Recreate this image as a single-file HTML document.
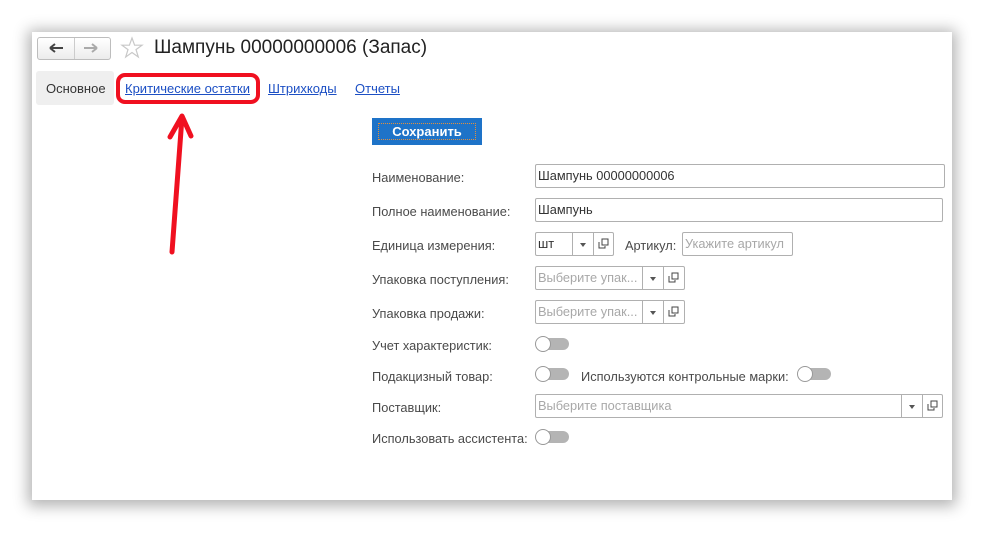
<!DOCTYPE html>
<html><head><meta charset="utf-8"><style>
*{box-sizing:border-box}
body{margin:0;width:984px;height:533px;background:#fff;font-family:"Liberation Sans",Arial,sans-serif;font-size:13px;color:#444;position:relative;overflow:hidden}
.panel{position:absolute;left:32px;top:32px;width:920px;height:468px;background:#fff;box-shadow:0 2px 14px 4px rgba(0,0,0,.3)}
.a{position:absolute}
.lbl{position:absolute;left:372px;color:#4a4a4a;font-size:12.8px}
.in{position:absolute;border:1px solid #b0b0b0;border-radius:2px;background:#fff;height:24px;line-height:22px;padding-left:2px;color:#333;font-size:12.8px;white-space:nowrap}
.ph{color:#a8a8a8}
.dd,.op{position:absolute;top:0;height:22px;border-left:1px solid #b0b0b0}
.dd:after{content:"";position:absolute;left:7px;top:10px;border:3px solid transparent;border-top:4px solid #555}
.tg{position:absolute;width:34px;height:16px}
.tg:before{content:"";position:absolute;left:8px;top:2px;width:26px;height:12px;border-radius:6px;background:#b4b4b4}
.tg:after{content:"";position:absolute;left:0;top:0;width:16px;height:16px;border-radius:50%;background:#fff;border:1px solid #999;box-sizing:border-box}
a{color:#1c4fc4;text-decoration:underline}
</style></head><body>
<div class="panel"></div>
<div class="a" style="left:37px;top:37px;width:74px;height:23px;border:1px solid #bdbdbd;border-radius:3px;background:linear-gradient(#fff,#ececec)"></div>
<div class="a" style="left:74px;top:38px;width:1px;height:21px;background:#ccc"></div>
<svg class="a" style="left:44px;top:41px" width="64" height="14"><path d="M6 7H19M6 7L11 3M6 7L11 11" stroke="#444" stroke-width="2" fill="none"/><path d="M53 7H40M53 7L48 3M53 7L48 11" stroke="#aaa" stroke-width="2" fill="none"/></svg>
<svg class="a" style="left:120px;top:36px" width="24" height="24"><path d="M12 2L14.6 9.2H22L16 13.6L18.3 21L12 16.5L5.7 21L8 13.6L2 9.2H9.4Z" fill="none" stroke="#c8c8c8" stroke-width="1.2"/></svg>
<div class="a" style="left:154px;top:37px;font-size:19px;color:#222">Шампунь 00000000006 (Запас)</div>
<div class="a" style="left:36px;top:71px;width:78px;height:34px;background:#efefef;border-radius:3px"></div>
<div class="a" style="left:46px;top:81px;color:#333">Основное</div>
<div class="a" style="left:125px;top:81px"><a>Критические остатки</a></div>
<div class="a" style="left:268px;top:81px"><a>Штрихкоды</a></div>
<div class="a" style="left:355px;top:81px"><a>Отчеты</a></div>
<div class="a" style="left:116px;top:73px;width:144px;height:31px;border:4px solid #f01020;border-radius:9px"></div>
<svg class="a" style="left:0;top:0" width="984" height="533"><path d="M172 252L182 117M170 137L182 116L191 136" stroke="#f01020" stroke-width="5" fill="none" stroke-linecap="round" stroke-linejoin="round"/></svg>
<div class="a" style="left:372px;top:118px;width:110px;height:27px;background:#1e73c8"></div>
<div class="a" style="left:378px;top:123px;width:98px;height:17px;border:1px dotted #e09040;color:#fff;font-weight:bold;font-size:13px;text-align:center;line-height:15px">Сохранить</div>
<div class="lbl" style="top:170px">Наименование:</div>
<div class="in" style="left:535px;top:164px;width:410px">Шампунь 00000000006</div>
<div class="lbl" style="top:204px">Полное наименование:</div>
<div class="in" style="left:535px;top:198px;width:408px">Шампунь</div>
<div class="lbl" style="top:238px">Единица измерения:</div>
<div class="in" style="left:535px;top:232px;width:79px">шт<div class="dd" style="left:36px;width:21px"></div><div class="op" style="left:57px;width:21px"></div></div>
<div class="a" style="left:625px;top:238px;color:#4a4a4a;font-size:12.8px">Артикул:</div>
<div class="in ph" style="left:682px;top:232px;width:111px;overflow:hidden">Укажите артикул</div>
<div class="lbl" style="top:272px">Упаковка поступления:</div>
<div class="in ph" style="left:535px;top:266px;width:150px">Выберите упак...<div class="dd" style="left:106px;width:21px;background:#fff"></div><div class="op" style="left:127px;width:21px"></div></div>
<div class="lbl" style="top:306px">Упаковка продажи:</div>
<div class="in ph" style="left:535px;top:300px;width:150px">Выберите упак...<div class="dd" style="left:106px;width:21px;background:#fff"></div><div class="op" style="left:127px;width:21px"></div></div>
<div class="lbl" style="top:338px">Учет характеристик:</div>
<div class="tg" style="left:535px;top:336px"></div>
<div class="lbl" style="top:369px">Подакцизный товар:</div>
<div class="tg" style="left:535px;top:366px"></div>
<div class="a" style="left:581px;top:369px;color:#4a4a4a;font-size:12.8px">Используются контрольные марки:</div>
<div class="tg" style="left:797px;top:366px"></div>
<div class="lbl" style="top:400px">Поставщик:</div>
<div class="in ph" style="left:535px;top:394px;width:408px">Выберите поставщика<div class="dd" style="left:365px;width:21px"></div><div class="op" style="left:386px;width:21px"></div></div>
<div class="lbl" style="top:431px">Использовать ассистента:</div>
<div class="tg" style="left:535px;top:429px"></div>
<svg class="a" style="left:598px;top:238px" width="11" height="11"><path d="M1 4V10H7V8M4 1H10V7H4Z" stroke="#444" fill="none"/></svg>
<svg class="a" style="left:668px;top:272px" width="11" height="11"><path d="M1 4V10H7V8M4 1H10V7H4Z" stroke="#444" fill="none"/></svg>
<svg class="a" style="left:668px;top:306px" width="11" height="11"><path d="M1 4V10H7V8M4 1H10V7H4Z" stroke="#444" fill="none"/></svg>
<svg class="a" style="left:927px;top:400px" width="11" height="11"><path d="M1 4V10H7V8M4 1H10V7H4Z" stroke="#444" fill="none"/></svg>
</body></html>
